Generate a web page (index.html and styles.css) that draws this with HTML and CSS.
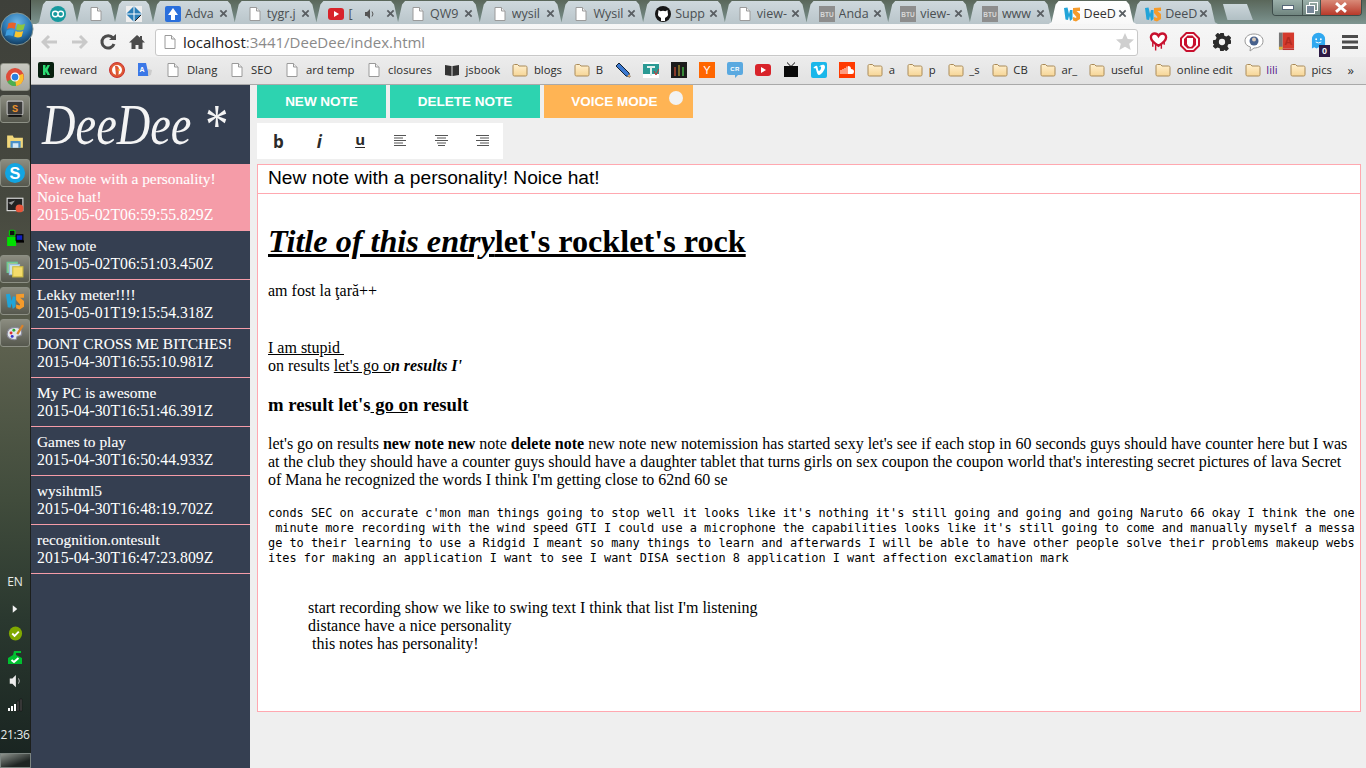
FILE: index.html
```html
<!DOCTYPE html>
<html lang="en">
<head>
<meta charset="utf-8">
<title>DeeDee</title>
<link rel="stylesheet" href="styles.css">
</head>
<body>
<svg class="defs" width="0" height="0" aria-hidden="true">
  <defs>
    <linearGradient id="fold" x1="0" y1="0" x2="0" y2="1"><stop offset="0" stop-color="#fff0cf"/><stop offset="1" stop-color="#f6d596"/></linearGradient>
    <symbol id="page" viewBox="0 0 16 16"><path d="M3 1.500h6.500L13 5v9.500H3z" fill="#fff" stroke="#9a9a9a"/><path d="M9.500 1.500V5H13" fill="#eee" stroke="#9a9a9a"/></symbol>
    <symbol id="folder" viewBox="0 0 16 16"><path d="M1 4c0-1 .5-1.500 1.500-1.500h3L7 4h6.500c1 0 1.500.5 1.500 1.500v7c0 1-.5 1.500-1.500 1.500h-11C1.500 14 1 13.500 1 12.500z" fill="url(#fold)" stroke="#a98a58"/></symbol>
    <symbol id="close" viewBox="0 0 10 10"><path d="M1.500 1.500l7 7M8.500 1.500l-7 7" stroke="#5a5f63" stroke-width="2" fill="none"/></symbol>
    <symbol id="ws" viewBox="0 0 16 16"><path d="M0 2l3.500-.5L5 8l1-4h2.500v9L6 15l-1-5-1 4-2.500-.5z" fill="#21a4d8"/><path d="M9 2l7-.5V5h-3.500L16 8v5l-4 2.500-3-1V11l3 1 .5-1L9 7z" fill="#f59b2b"/></symbol>
    <symbol id="btu" viewBox="0 0 16 16"><rect width="16" height="16" fill="#8d8d8d"/><text x="8" y="10.500" text-anchor="middle" class="btu-t">BTU</text></symbol>
    <symbol id="align-l" viewBox="0 0 13 12"><path d="M0 .5h12M0 3h9M0 5.500h12M0 8h9M0 10.500h12" stroke="#555" fill="none"/></symbol>
    <symbol id="align-c" viewBox="0 0 13 12"><path d="M0 .5h13M2 3h9M0 5.500h13M2 8h9M3 10.500h7" stroke="#555" fill="none"/></symbol>
    <symbol id="align-r" viewBox="0 0 13 12"><path d="M0 .5h13M4 3h9M0 5.500h13M4 8h9M1 10.500h12" stroke="#555" fill="none"/></symbol>
  </defs>
</svg>

<aside class="taskbar">
  <div class="orb">
    <svg viewBox="0 0 36 38" width="34" height="38"><defs><radialGradient id="orbg" cx=".5" cy=".3" r=".75"><stop offset="0" stop-color="#6db6e6"/><stop offset=".55" stop-color="#2b78b4"/><stop offset="1" stop-color="#0d2f4d"/></radialGradient></defs><circle cx="18" cy="19" r="17" fill="url(#orbg)" stroke="#8a9a96"/><path d="M9 13q4-2 8 0l-1.500 6q-4-2-8 0z" fill="#e8622a"/><path d="M18.500 13.500q4 2 8 0L25 19.500q-4 2-8 0z" fill="#8cc63f"/><path d="M7 20.500q4-2 8 0l-1.500 6q-4-2-8 0z" fill="#3f9fe0"/><path d="M16.500 21q4 2 8 0L23 27q-4 2-8 0z" fill="#fcc52d"/></svg>
  </div>
  <div class="tb-btn framed on"><svg viewBox="0 0 16 16" width="18" height="18"><circle cx="8" cy="8" r="8" fill="#dd4b39"/><path d="M8 8L1 12a8 8 0 0 0 8 4z" fill="#4caf50"/><path d="M8 8l1 8a8 8 0 0 0 6-11z" fill="#fbc02d"/><circle cx="8" cy="8" r="3.500" fill="#2a7fe0" stroke="#fff"/></svg></div>
  <div class="tb-btn framed"><svg viewBox="0 0 16 16" width="18" height="18"><rect x="1" y="1" width="14" height="12" rx="1" fill="#3a3a3a" stroke="#bbb"/><text x="8" y="11" text-anchor="middle" class="ico-s">S</text><rect x="2" y="13" width="12" height="2" fill="#111"/></svg></div>
  <div class="tb-btn"><svg viewBox="0 0 16 16" width="18" height="18"><path d="M1 3h5l1 2h8v9H1z" fill="#f1d77a"/><rect x="4" y="8" width="9" height="6" fill="#4a90c8"/><rect x="6" y="10" width="5" height="4" fill="#d6e8f5"/></svg></div>
  <div class="tb-btn framed"><svg viewBox="0 0 16 16" width="20" height="20"><circle cx="8" cy="8" r="8" fill="#12a5e2"/><text x="8" y="12.500" text-anchor="middle" class="ico-sk">S</text></svg></div>
  <div class="tb-btn"><svg viewBox="0 0 16 16" width="18" height="18"><rect x="1" y="2" width="14" height="11" fill="#222" stroke="#ddd"/><path d="M2 6l6-2-3 4z" fill="#999"/><circle cx="12" cy="11" r="3.500" fill="#e8553a"/></svg></div>
  <div class="tb-btn"><svg viewBox="0 0 16 16" width="18" height="18"><rect x="1" y="8" width="8" height="8" fill="#00e000"/><rect x="3" y="2" width="5" height="5" rx="1" fill="#111" stroke="#0c0"/><rect x="9" y="6" width="6" height="5" fill="#1020c0" stroke="#000"/><path d="M9 12h7" stroke="#000" stroke-width="2"/></svg></div>
  <div class="tb-btn framed"><svg viewBox="0 0 16 16" width="18" height="18"><rect x="1" y="2" width="9" height="9" fill="#9cc98c" stroke="#6c9"/><rect x="3" y="4" width="9" height="9" fill="#c8e0e8" stroke="#9bd"/><rect x="6" y="6" width="9" height="9" fill="#f4dc6a" stroke="#cb4"/></svg></div>
  <div class="tb-btn framed"><svg viewBox="0 0 16 16" width="18" height="18"><use href="#ws"/></svg></div>
  <div class="tb-btn framed"><svg viewBox="0 0 16 16" width="18" height="18"><path d="M8 3C3 3 1 6 1 9c0 3 3 5 7 5 2 0 1-2 2-3s4 1 4-3-3-5-6-5z" fill="#dfe6ea" stroke="#889"/><circle cx="4.500" cy="8" r="1.300" fill="#d33"/><circle cx="7" cy="5.500" r="1.300" fill="#3a3"/><circle cx="5.500" cy="11" r="1.300" fill="#33c"/><path d="M10 9L15 1" stroke="#d9822b" stroke-width="2"/></svg></div>
  <div class="tray">
    <div class="tray-item lang">EN</div>
    <div class="tray-item"><svg viewBox="0 0 8 10" width="6" height="8"><path d="M1 0l6 5-6 5z" fill="#f4f4f4"/></svg></div>
    <div class="tray-item"><svg viewBox="0 0 16 16" width="15" height="15"><ellipse cx="8" cy="8" rx="7" ry="7.500" fill="#80a800"/><path d="M4.500 8l2.500 2.500L11.500 6" stroke="#fff" stroke-width="2" fill="none"/></svg></div>
    <div class="tray-item"><svg viewBox="0 0 16 16" width="16" height="16"><path d="M1 9l5-3 1-4h7v2H9v2l6 3v6H1z" fill="#00c030"/><path d="M4.500 11l2.500 2L11.500 9" stroke="#fff" stroke-width="2" fill="none"/></svg></div>
    <div class="tray-item"><svg viewBox="0 0 16 16" width="14" height="14"><path d="M2 5h3l4-4v14l-4-4H2z" fill="#eee"/><path d="M12 5q2 3 0 6" stroke="#ccc" fill="none"/></svg></div>
    <div class="tray-item"><svg viewBox="0 0 16 14" width="16" height="14"><path d="M1 10h2v3H1zM4 8h2v5H4zM7 6h2v7H7z" fill="#fff"/><path d="M10 3h2v10h-2zM13 1h2v12h-2z" fill="#444" stroke="#111" stroke-width=".5"/></svg></div>
    <div class="tray-item clock">21:36</div>
    <div class="show-desktop"></div>
  </div>
</aside>

<div class="window">
  <header class="tabstrip">
    <div class="tab pin"><svg class="ic" viewBox="0 0 16 16"><circle cx="8" cy="8" r="8" fill="#17999e"/><path d="M2.500 8a2.500 2.500 0 0 1 5.500 0 2.500 2.500 0 0 0 5.500 0a2.500 2.500 0 0 0-5.500 0 2.500 2.500 0 0 1-5.500 0z" fill="none" stroke="#fff" stroke-width="1.300"/></svg></div>
    <div class="tab pin"><svg class="ic"><use href="#page"/></svg></div>
    <div class="tab pin"><svg class="ic" viewBox="0 0 16 16"><rect width="16" height="16" fill="#eee"/><path d="M8 0l8 8-8 8-8-8z" fill="#2a7fb8"/><path d="M0 8h16M8 0v16" stroke="#fff"/><path d="M9 15L15 9" stroke="#222"/></svg></div>
    <div class="tab"><svg class="ic" viewBox="0 0 16 16"><rect width="16" height="16" rx="2" fill="#2a6fdc"/><path d="M8 2l5 7H10v5H6V9H3z" fill="#fff"/></svg><span class="t">Adva</span><svg class="x"><use href="#close"/></svg></div>
    <div class="tab"><svg class="ic"><use href="#page"/></svg><span class="t">tygr.j</span><svg class="x"><use href="#close"/></svg></div>
    <div class="tab"><svg class="ic" viewBox="0 0 16 16"><rect y="2" width="16" height="12" rx="3" fill="#d8232a"/><path d="M6 5l5 3-5 3z" fill="#fff"/></svg><span class="t narrow">[</span><svg class="spk" viewBox="0 0 12 12"><path d="M1 4h2l3-3v10L3 8H1z" fill="#555"/><path d="M8 3.500q2 2.500 0 5" stroke="#555" fill="none"/></svg><svg class="x"><use href="#close"/></svg></div>
    <div class="tab"><svg class="ic"><use href="#page"/></svg><span class="t">QW9</span><svg class="x"><use href="#close"/></svg></div>
    <div class="tab"><svg class="ic"><use href="#page"/></svg><span class="t">wysil</span><svg class="x"><use href="#close"/></svg></div>
    <div class="tab"><svg class="ic"><use href="#page"/></svg><span class="t">Wysil</span><svg class="x"><use href="#close"/></svg></div>
    <div class="tab"><svg class="ic" viewBox="0 0 16 16"><circle cx="8" cy="8" r="8" fill="#161616"/><path d="M3.500 4l2 1.200Q8 4.500 10.500 5.200l2-1.200.3 3q1 3-1.800 4.300L10 12v3H6v-3l-1-.7Q2.200 10 3.200 7z" fill="#fff"/></svg><span class="t">Supp</span><svg class="x"><use href="#close"/></svg></div>
    <div class="tab"><svg class="ic"><use href="#page"/></svg><span class="t">view-</span><svg class="x"><use href="#close"/></svg></div>
    <div class="tab"><svg class="ic"><use href="#btu"/></svg><span class="t">Anda</span><svg class="x"><use href="#close"/></svg></div>
    <div class="tab"><svg class="ic"><use href="#btu"/></svg><span class="t">view-</span><svg class="x"><use href="#close"/></svg></div>
    <div class="tab"><svg class="ic"><use href="#btu"/></svg><span class="t">www</span><svg class="x"><use href="#close"/></svg></div>
    <div class="tab active"><svg class="ic"><use href="#ws"/></svg><span class="t">DeeD</span><svg class="x"><use href="#close"/></svg></div>
    <div class="tab"><svg class="ic"><use href="#ws"/></svg><span class="t">DeeD</span><svg class="x"><use href="#close"/></svg></div>
    <div class="newtab"></div>
    <div class="winctl">
      <div class="wc min"><svg viewBox="0 0 12 6" width="12" height="6"><rect x=".5" y=".5" width="11" height="4" fill="#fff" stroke="#567"/></svg></div>
      <div class="wc max"><svg viewBox="0 0 12 12" width="12" height="12"><rect x="3.500" y=".5" width="8" height="8" fill="none" stroke="#fff"/><rect x=".5" y="3.500" width="8" height="8" fill="#789" stroke="#fff"/></svg></div>
      <div class="wc cls"><svg viewBox="0 0 12 10" width="14" height="11"><path d="M1.500 1l9 8M10.500 1l-9 8" stroke="#fff" stroke-width="2.600"/></svg></div>
    </div>
  </header>

  <div class="toolbar">
    <div class="tool"><svg viewBox="0 0 18 16" width="18" height="16"><path d="M8 2L2 8l6 6M2 8h14" stroke="#c9c9c9" stroke-width="3" fill="none"/></svg></div>
    <div class="tool"><svg viewBox="0 0 18 16" width="18" height="16"><path d="M10 2l6 6-6 6M16 8H2" stroke="#c9c9c9" stroke-width="3" fill="none"/></svg></div>
    <div class="tool"><svg viewBox="0 0 18 18" width="18" height="18"><path d="M14 5a6.200 6.200 0 1 0 1 6" stroke="#4c4c4c" stroke-width="3" fill="none"/><path d="M10 7h7V1z" fill="#4c4c4c"/></svg></div>
    <div class="tool"><svg viewBox="0 0 16 16" width="16" height="16"><path d="M8 1L0 8.500h2.500V15H6.500v-4h3v4h4V8.500H16L13 5.500V2h-2v1.500z" fill="#4c4c4c"/></svg></div>
    <div class="omnibox">
      <svg class="ic" viewBox="0 0 16 16"><use href="#page"/></svg>
      <span class="url"><b class="host">localhost</b>:3441/DeeDee/index.html</span>
      <svg class="star" viewBox="0 0 18 18" width="18" height="18"><path d="M9 0l2.700 6 6.300.6-4.800 4.200 1.500 6.200L9 13.700 3.300 17l1.500-6.200L0 6.600 6.300 6z" fill="#cfcfcf"/></svg>
    </div>
    <div class="exts">
      <div class="ext"><svg viewBox="0 0 20 22" width="19" height="22"><path d="M10 15C5 12 2 9.500 2 6 2 3.500 4 2 6 2c2 0 3.200 1 4 2.500C10.800 3 12 2 14 2c2 0 4 1.500 4 4 0 3.500-3 6-8 9z" fill="#fff" stroke="#c8102e" stroke-width="2.500"/><path d="M4 11v5M7 13v7M13 13v5M16 11v3" stroke="#c8102e" stroke-width="1.500"/></svg></div>
      <div class="ext"><svg viewBox="0 0 20 20" width="20" height="20"><path d="M6 0h8l6 6v8l-6 6H6l-6-6V6z" fill="#c8102e"/><path d="M6.800 2h6.400L18 6.800v6.400L13.200 18H6.800L2 13.200V6.800z" fill="#fff"/><path d="M7.500 3.500h5L16 7v6l-3.500 3.500h-5L4 13V7z" fill="#c8102e"/><path d="M7 8.500V6h6v5q0 4-3 4-2 0-3-3z" fill="#fff"/></svg></div>
      <div class="ext"><svg viewBox="0 0 20 20" width="18" height="18"><path d="M8 0h4l.6 3 2.200 1 2.600-1.600 2.800 2.800L19 7.800 20 8v4l-3 .6-1 2.200 1.600 2.600-2.800 2.800-2.600-1.600L12 20H8l-.6-3-2.200-1-2.600 1.600-2.800-2.800L1.400 12.200 0 12V8l3-.6 1-2.200L2.400 2.600l2.800-2.800 2.600 1.600z" fill="#2b2b2b"/><circle cx="10" cy="10" r="3.500" fill="#f3f3f3"/></svg></div>
      <div class="ext"><svg viewBox="0 0 20 20" width="20" height="20"><path d="M10 2c5 0 9 2.500 9 7s-4 7-9 7l-4 3 .5-4C3 14 1 12 1 9c0-4.500 4-7 9-7z" fill="#fff" stroke="#999"/><circle cx="10" cy="9" r="4.500" fill="#46608c"/><circle cx="10" cy="7.500" r="2" fill="#d8c8b8"/></svg></div>
      <div class="ext"><svg viewBox="0 0 18 20" width="17" height="20"><rect x="1" width="4" height="18" fill="#777"/><rect x="5" width="12" height="17" fill="#d53a2e"/><text x="11" y="13" text-anchor="middle" class="ico-a">A</text><rect x="1" y="15" width="4" height="3" fill="#d9b040"/><rect x="5" y="17" width="12" height="1.500" fill="#b33"/></svg></div>
      <div class="ext ghost"><svg viewBox="0 0 16 20" width="15" height="20"><path d="M1 17V7a7 7 0 0 1 14 0v10l-2.500-1.500L10 17l-2-1.500L6 17l-2.500-1.500z" fill="#2fa8f0"/><circle cx="5.500" cy="7" r="1" fill="#fff"/><circle cx="10.500" cy="7" r="1" fill="#fff"/><path d="M5 10q3 2 6 0" stroke="#fff" fill="none"/></svg><span class="badge">0</span></div>
      <div class="ext"><svg viewBox="0 0 16 14" width="16" height="14"><path d="M0 1.500h16M0 7h16M0 12.500h16" stroke="#4c4c4c" stroke-width="3"/></svg></div>
    </div>
  </div>

  <nav class="bookmarks">
    <a class="bm"><svg class="ic" viewBox="0 0 16 16"><rect width="16" height="16" rx="2" fill="#07200f"/><path d="M5 3h2.500v3.500L9.500 3H12L9.500 8 12 13H9.500L7.500 9.500V13H5z" fill="#2bde73"/></svg>reward</a>
    <a class="bm"><svg class="ic" viewBox="0 0 16 16"><circle cx="8" cy="8" r="7.500" fill="#de5833" stroke="#c33"/><circle cx="8" cy="8" r="5" fill="#fff"/><path d="M6 4q3-1 4 3l-.5 6H7z" fill="#de5833"/><path d="M8 8l3-1v2z" fill="#fc3"/></svg></a>
    <a class="bm"><svg class="ic" viewBox="0 0 16 16"><path d="M1 1h8l3 13H1z" fill="#3b78e7"/><text x="5" y="10" text-anchor="middle" class="ico-g">A</text><path d="M11 7l4 1-1 5-3 1z" fill="#ccc"/></svg></a>
    <a class="bm"><svg class="ic"><use href="#page"/></svg>Dlang</a>
    <a class="bm"><svg class="ic"><use href="#page"/></svg>SEO</a>
    <a class="bm"><svg class="ic"><use href="#page"/></svg>ard temp</a>
    <a class="bm"><svg class="ic"><use href="#page"/></svg>closures</a>
    <a class="bm"><svg class="ic" viewBox="0 0 16 16"><path d="M1 3l6 1v10l-6-1zM15 3L9 4v10l6-1z" fill="#333"/><path d="M7 4h2v10H7z" fill="#888"/></svg>jsbook</a>
    <a class="bm"><svg class="ic"><use href="#folder"/></svg>blogs</a>
    <a class="bm"><svg class="ic"><use href="#folder"/></svg>B</a>
    <a class="bm"><svg class="ic" viewBox="0 0 16 16"><path d="M1 4l3-3 10 10 1 4-4-1z" fill="#3b78d0" stroke="#123"/><path d="M12 14.500l2.500-2.500 1 3z" fill="#e8b070"/></svg></a>
    <a class="bm"><svg class="ic" viewBox="0 0 16 16"><rect width="16" height="16" fill="#fff"/><rect y="2" width="16" height="10" fill="#2a9a94"/><path d="M4 4h8v2H9v8H7V6H4z" fill="#e0f0ee"/><path d="M11 9l2 4 3-6" stroke="#c33" fill="none"/></svg></a>
    <a class="bm"><svg class="ic" viewBox="0 0 16 16"><rect width="16" height="16" fill="#1c1c1c"/><path d="M3 5h2v9H3z" fill="#8a3a2a"/><path d="M7 3h2v11H7z" fill="#7a6a2a"/><path d="M11 5h2v9h-2z" fill="#3a8a3a"/></svg></a>
    <a class="bm"><svg class="ic" viewBox="0 0 16 16"><rect width="16" height="16" fill="#ff6600"/><text x="8" y="12" text-anchor="middle" class="ico-y">Y</text></svg></a>
    <a class="bm"><svg class="ic" viewBox="0 0 16 16"><path d="M2 0h12a2 2 0 0 1 2 2v9a2 2 0 0 1-2 2h-3l-3 3v-3H2a2 2 0 0 1-2-2V2a2 2 0 0 1 2-2z" fill="#5aa9e0"/><text x="8" y="9" text-anchor="middle" class="ico-cr">CR</text></svg></a>
    <a class="bm"><svg class="ic" viewBox="0 0 16 16"><rect y="2" width="16" height="12" rx="3" fill="#d8232a"/><path d="M6 5l5 3-5 3z" fill="#fff"/></svg></a>
    <a class="bm"><svg class="ic" viewBox="0 0 16 16"><path d="M4 0l4 4 4-4v1L9 4h6v11H1V4h6L4 1z" fill="#0a0a0a"/></svg></a>
    <a class="bm"><svg class="ic" viewBox="0 0 16 16"><rect width="16" height="16" rx="2" fill="#1ab7ea"/><path d="M2.500 5.500Q5 3 6 4c1 1 .8 5 2 5s2.500-3 2-4-2 0-2 0c.5-2 6-4 6 0 0 3-4 8-6 8-2.500 0-2.500-7-4-7L3 6.500z" fill="#fff"/></svg></a>
    <a class="bm"><svg class="ic" viewBox="0 0 16 16"><rect width="16" height="16" fill="#ff3a00"/><path d="M2 8v4M4 7v5M6 6v6M8 4.500V12" stroke="#fff"/><path d="M9 4q3 0 3 3 3 0 3 2.500T13 12H9z" fill="#fff"/></svg></a>
    <a class="bm"><svg class="ic"><use href="#folder"/></svg>a</a>
    <a class="bm"><svg class="ic"><use href="#folder"/></svg>p</a>
    <a class="bm"><svg class="ic"><use href="#folder"/></svg>_s</a>
    <a class="bm"><svg class="ic"><use href="#folder"/></svg>CB</a>
    <a class="bm"><svg class="ic"><use href="#folder"/></svg>ar_</a>
    <a class="bm"><svg class="ic"><use href="#folder"/></svg>useful</a>
    <a class="bm"><svg class="ic"><use href="#folder"/></svg>online edit</a>
    <a class="bm visited"><svg class="ic"><use href="#folder"/></svg>lili</a>
    <a class="bm"><svg class="ic"><use href="#folder"/></svg>pics</a>
    <span class="more">»</span>
  </nav>

  <div class="page">
    <aside class="sidebar">
      <div class="logo"><span class="logo-text">DeeDee *</span></div>
      <ul class="notes">
        <li class="note current">New note with a personality! Noice hat!<span class="stamp">2015-05-02T06:59:55.829Z</span></li>
        <li class="note">New note<span class="stamp">2015-05-02T06:51:03.450Z</span></li>
        <li class="note">Lekky meter!!!!<span class="stamp">2015-05-01T19:15:54.318Z</span></li>
        <li class="note">DONT CROSS ME BITCHES!<span class="stamp">2015-04-30T16:55:10.981Z</span></li>
        <li class="note">My PC is awesome<span class="stamp">2015-04-30T16:51:46.391Z</span></li>
        <li class="note">Games to play<span class="stamp">2015-04-30T16:50:44.933Z</span></li>
        <li class="note">wysihtml5<span class="stamp">2015-04-30T16:48:19.702Z</span></li>
        <li class="note">recognition.ontesult<span class="stamp">2015-04-30T16:47:23.809Z</span></li>
      </ul>
    </aside>
    <main class="main">
      <div class="actions">
        <button class="act new">NEW NOTE</button>
        <button class="act del">DELETE NOTE</button>
        <button class="act voice">VOICE MODE<span class="dot"></span></button>
      </div>
      <div class="format">
        <span class="fmt b">b</span>
        <span class="fmt i">i</span>
        <span class="fmt u">u</span>
        <span class="fmt"><svg width="13" height="12"><use href="#align-l"/></svg></span>
        <span class="fmt"><svg width="13" height="12"><use href="#align-c"/></svg></span>
        <span class="fmt"><svg width="13" height="12"><use href="#align-r"/></svg></span>
      </div>
      <section class="editor">
        <div class="title">New note with a personality! Noice hat!</div>
        <article class="body">
          <h1><u><i>Title of this entry</i>let's rocklet's rock</u></h1>
          <p>am fost la ţară++</p>
          <p class="gap"><u>I am stupid&nbsp;</u><br>on results <u>let's go o</u><b><i>n results I'</i></b></p>
          <h3>m result let's<u> go o</u>n result</h3>
          <p>let's go on results <b>new note new</b> note <b>delete note</b> new note new notemission has started sexy let's see if each stop in 60 seconds guys should have counter here but I was at the club they should have a counter guys should have a daughter tablet that turns girls on sex coupon the coupon world that's interesting secret pictures of lava Secret of Mana he recognized the words I think I'm getting close to 62nd 60 se</p>
          <pre class="code">conds SEC on accurate c'mon man things going to stop well it looks like it's nothing it's still going and going and going Naruto 66 okay I think the one
 minute more recording with the wind speed GTI I could use a microphone the capabilities looks like it's still going to come and manually myself a messa
ge to their learning to use a Ridgid I meant so many things to learn and afterwards I will be able to have other people solve their problems makeup webs
ites for making an application I want to see I want DISA section 8 application I want affection exclamation mark</pre>
          <blockquote>start recording show we like to swing text I think that list I'm listening<br>distance have a nice personality<br>&nbsp;this notes has personality!</blockquote>
        </article>
      </section>
    </main>
  </div>
</div>
</body>
</html>
```

FILE: styles.css
```css
* { box-sizing: border-box; }
html, body { margin: 0; padding: 0; height: 100%; }
body {
  display: flex;
  width: 1366px;
  height: 768px;
  overflow: hidden;
  font-family: "Liberation Serif", serif;
  background: #efefef;
}
.defs { position: absolute; }
svg { display: block; flex: none; }

/* taskbar */
.taskbar {
  width: 31px;
  flex: none;
  display: flex;
  flex-direction: column;
  align-items: center;
  gap: 4px;
  padding-top: 63px;
  position: relative;
  z-index: 2;
  border-right: 1px solid #1c1f1c;
  background: linear-gradient(180deg, #3e403a 0, #46483f 200px, #5c604e 350px, #414c3c 500px, #2a382f 620px, #182320 768px);
}
.orb { position: absolute; left: 0; top: 10px; }
.tb-btn {
  width: 30px;
  height: 28px;
  flex: none;
  display: flex;
  align-items: center;
  justify-content: center;
}
.framed {
  border: 1px solid #8d9085;
  border-radius: 3px;
  background: linear-gradient(180deg, #8b8c80, #56584e);
}
.framed.on { background: linear-gradient(180deg, #c8c8c0, #a8a8a0); }
.tray {
  margin-top: auto;
  width: 100%;
  display: flex;
  flex-direction: column;
  align-items: center;
}
.tray-item {
  height: 24px;
  display: flex;
  align-items: center;
  justify-content: center;
  color: #e8ecea;
  font: 12px "Open Sans", sans-serif;
}
.lang { height: 27px; padding-bottom: 5px; }
.clock { height: 28px; margin-top: 3px; letter-spacing: -.3px; white-space: nowrap; }
.show-desktop {
  width: 31px;
  height: 15px;
  margin-top: 5px;
  border: 1px solid #7b8480;
  background: linear-gradient(160deg, #8d938d, #1e2422 70%);
}
.ico-s { font: bold 9px "Liberation Mono", monospace; fill: #e8912c; }
.ico-sk { font: bold 13px "Liberation Sans", sans-serif; fill: #fff; }
.ico-a { font: bold 12px "Liberation Sans", sans-serif; fill: #b22a20; }
.ico-g { font: bold 7px "Liberation Sans", sans-serif; fill: #fff; }
.ico-y { font: 11px "Liberation Sans", sans-serif; fill: #fff; }
.ico-cr { font: bold 6px "Liberation Sans", sans-serif; fill: #fff; letter-spacing: .4px; }
.btu-t { font: bold 6.500px "Liberation Sans", sans-serif; fill: #d8d8d8; }

/* window */
.window {
  width: 1335px;
  display: flex;
  flex-direction: column;
  flex: none;
}
.tabstrip {
  height: 24px;
  flex: none;
  display: flex;
  align-items: flex-end;
  padding-left: 5px;
  background: linear-gradient(180deg, #5a675a 0, #6d8079 14px, #7e9590 24px);
}
.tab {
  width: 87.700px;
  height: 23px;
  flex: none;
  margin-right: -6px;
  padding: 2px 0 0 15px;
  display: flex;
  align-items: center;
  gap: 4px;
  font: 12.500px "Open Sans", sans-serif;
  color: #4a4f52;
  background: linear-gradient(180deg, #ced8dd, #b9c5ca);
  clip-path: polygon(0 100%, 3px 92%, 7px 15%, 10px 0, calc(100% - 10px) 0, calc(100% - 7px) 15%, calc(100% - 3px) 92%, 100% 100%);
}
.tab.pin { width: 44px; padding: 2px 0 0; justify-content: center; }
.tab.active { background: linear-gradient(180deg, #fff, #f8f8f8); color: #333; position: relative; z-index: 1; }
.ic { width: 16px; height: 16px; flex: none; }
.t { width: 33px; margin-right: -3px; overflow: hidden; white-space: nowrap; }
.t.narrow { width: 12px; margin-right: 0; }
.spk { width: 12px; height: 12px; margin-right: 6px; }
.x { width: 9px; height: 9px; }
.newtab {
  width: 30px;
  height: 16px;
  margin: 0 0 4px 11px;
  flex: none;
  background: linear-gradient(180deg, #cbd6da, #b1bfc4);
  clip-path: polygon(0 0, 80% 0, 100% 100%, 15% 100%);
}
.winctl {
  align-self: flex-start;
  margin-left: auto;
  margin-right: 4px;
  width: 90px;
  height: 16px;
  display: flex;
  border: 1px solid #3d4c4a;
  border-top: 0;
  border-radius: 0 0 4px 4px;
  overflow: hidden;
}
.wc { display: flex; align-items: center; justify-content: center; height: 100%; }
.min { width: 30px; background: linear-gradient(180deg, #9bb0aa, #70857f); border-right: 1px solid #45534f; }
.max { width: 18px; background: linear-gradient(180deg, #9bb0aa, #70857f); border-right: 1px solid #45534f; }
.cls { flex: 1; background: linear-gradient(180deg, #d98a78, #b8392a); }

.toolbar {
  height: 33px;
  flex: none;
  display: flex;
  align-items: center;
  padding: 3px 0 0 4px;
  background: linear-gradient(180deg, #f6f6f6, #f1f1f1);
}
.tool { width: 29px; display: flex; justify-content: center; flex: none; }
.omnibox {
  flex: 1;
  height: 27px;
  margin-left: 4px;
  display: flex;
  align-items: center;
  padding: 0 3px 0 6px;
  gap: 5px;
  background: #fff;
  border: 1px solid #c8c8c8;
  border-radius: 3px;
}
.url { flex: 1; font: 15px "Open Sans", sans-serif; color: #8a8a8a; white-space: nowrap; }
.host { font-weight: 400; color: #222; }
.exts { display: flex; margin-left: 4px; flex: none; }
.ext { width: 32px; height: 24px; display: flex; align-items: center; justify-content: center; position: relative; }
.badge {
  position: absolute;
  left: 17px;
  top: 15px;
  width: 11px;
  height: 12px;
  background: #2d1a44;
  color: #fff;
  font: bold 9px/12px "Liberation Sans", sans-serif;
  text-align: center;
}

.bookmarks {
  height: 28px;
  flex: none;
  display: flex;
  align-items: center;
  gap: 12px;
  padding: 0 0 2px 7px;
  background: linear-gradient(180deg, #ececec, #e2e2e2);
  border-bottom: 1px solid #a9a9a9;
  overflow: hidden;
  position: relative;
}
.bm {
  display: flex;
  align-items: center;
  gap: 5.700px;
  font: 11.300px "Open Sans", sans-serif;
  color: #2b2b2b;
  white-space: nowrap;
}
.visited { color: #551a8b; }
.more { position: absolute; right: 12px; font: 13px "Open Sans", sans-serif; color: #333; }

/* app */
.page { flex: 1; display: flex; min-height: 0; }
.sidebar {
  width: 219px;
  flex: none;
  background: #353f51;
  color: #fff;
}
.logo {
  height: 79px;
  display: flex;
  align-items: center;
  justify-content: center;
  color: #f4f4f4;
  white-space: nowrap;
  padding-right: 12px;
}
.logo-text {
  font: italic 400 58px "Liberation Serif", serif;
  transform: scaleX(.8);
  flex: none;
}
.notes { list-style: none; margin: 0; padding: 0; }
.note {
  padding: 6px;
  font-size: 15.400px;
  line-height: 18px;
  border-bottom: 1px solid #f59ca8;
  -webkit-text-stroke: .1px #fff;
}
.stamp { display: block; font-size: 15.750px; -webkit-text-stroke: 0; }
.note.current { background: #f59ca8; }

.main {
  flex: 1;
  min-width: 0;
  padding: 0 5px 0 7px;
  display: flex;
  flex-direction: column;
}
.actions { display: flex; gap: 4px; height: 33px; flex: none; }
.act {
  border: 0;
  padding: 0;
  color: #fff;
  font: bold 13.500px "Liberation Sans", sans-serif;
  display: flex;
  align-items: center;
  justify-content: center;
  position: relative;
}
.new { width: 129px; background: #2dd3b0; }
.del { width: 150px; background: #2dd3b0; }
.voice { width: 149px; background: #ffb454; padding-right: 8px; }
.dot {
  position: absolute;
  right: 10px;
  top: 6px;
  width: 14px;
  height: 14px;
  border-radius: 50%;
  background: #f2f2f2;
}
.format {
  width: 246px;
  height: 36px;
  flex: none;
  margin-top: 5px;
  padding-left: 1px;
  display: flex;
  background: #fff;
}
.fmt {
  width: 41px;
  display: flex;
  align-items: center;
  justify-content: center;
  font: bold 17px "Open Sans", sans-serif;
  color: #2a2a2a;
}
.fmt.i { font-style: italic; }
.fmt.u { font-size: 15px; text-decoration: underline; text-underline-offset: 2px; padding-bottom: 5px; }
.editor {
  height: 548px;
  flex: none;
  margin-top: 5px;
  border: 1px solid #ffa8b0;
  background: #fff;
  display: flex;
  flex-direction: column;
}
.title {
  height: 29px;
  flex: none;
  padding-left: 10px;
  border-bottom: 1px solid #ffa8b0;
  font: 19.200px/26px "Liberation Sans", sans-serif;
  color: #000;
}
.body { flex: 1; padding: 8px 6px 0 10px; color: #000; font-size: 16px; line-height: 18px; }
.body h1 { font-size: 32.200px; line-height: 37px; margin: 20.500px 0 22px; }
.body h3 { font-size: 18.720px; line-height: 22px; margin: 19.500px 0 18.720px; }
.body p { margin: 0; }
.body .gap { margin-top: 39px; }
.code {
  margin: 17.700px 0 0;
  font: 11.880px/15px "DejaVu Sans Mono", monospace;
  white-space: pre;
}
.body blockquote { margin: 33px 40px 0; }
```
